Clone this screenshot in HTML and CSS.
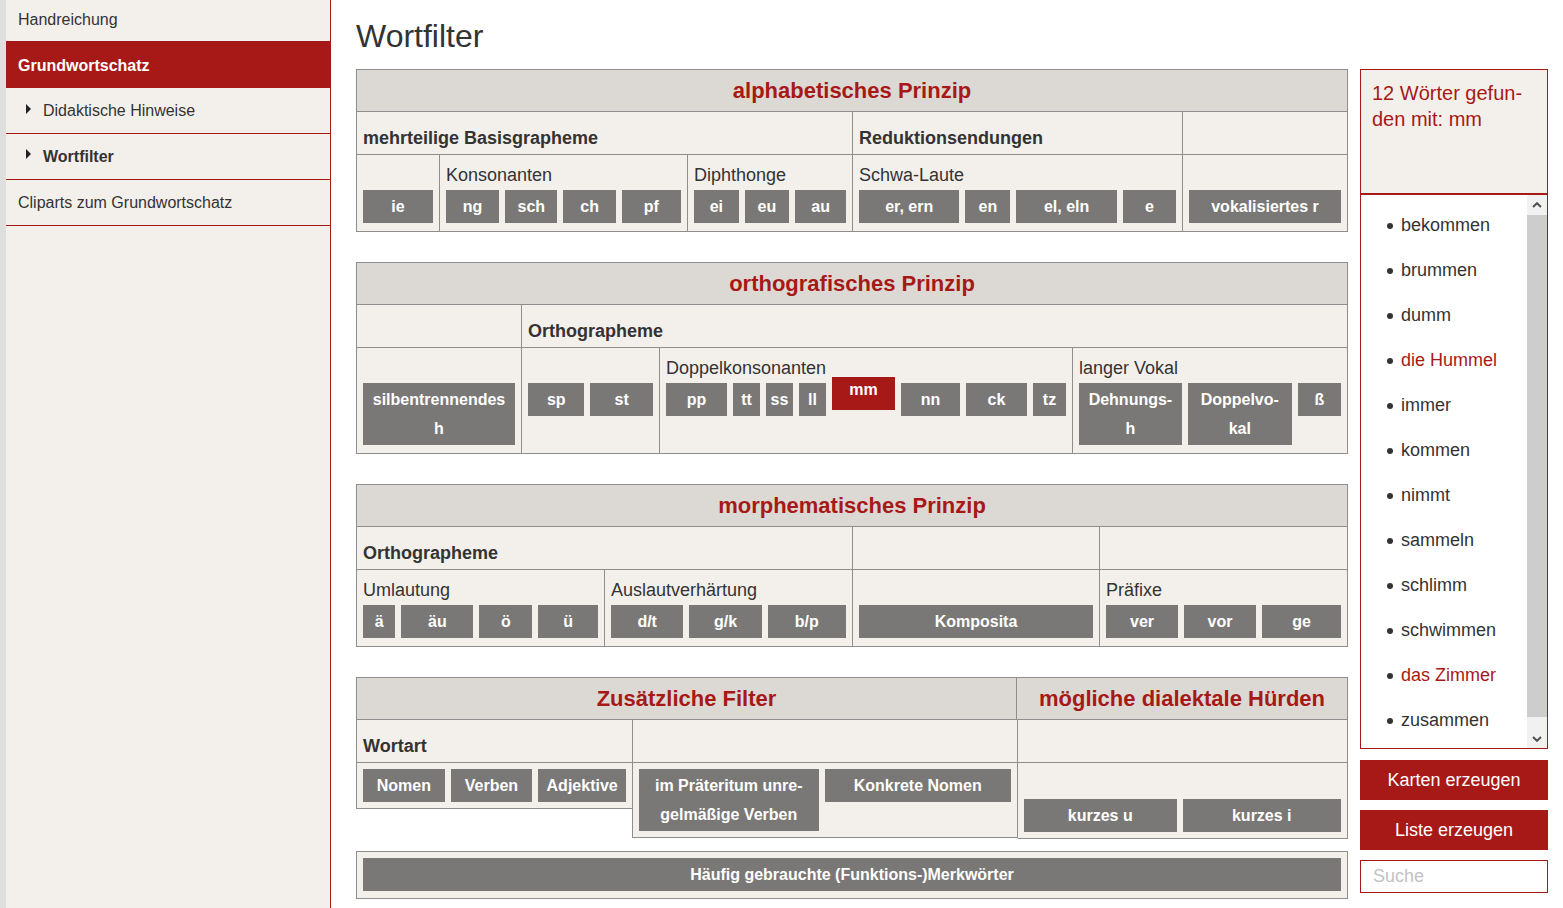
FILE: index.html
```html
<!DOCTYPE html>
<html lang="de">
<head>
<meta charset="utf-8">
<title>Wortfilter</title>
<link rel="stylesheet" href="styles.css">
</head>
<body>
<aside class="sidebar">
  <nav class="nav">
    <a class="nav-item nav-first">Handreichung</a>
    <a class="nav-item nav-active">Grundwortschatz</a>
    <a class="nav-item nav-sub"><span class="caret"></span>Didaktische Hinweise</a>
    <a class="nav-item nav-sub nav-bold"><span class="caret caret-up"></span>Wortfilter</a>
    <a class="nav-item">Cliparts zum Grundwortschatz</a>
  </nav>
</aside>
<main class="main">
  <h1 class="title">Wortfilter</h1>
  <div class="layout">
    <div class="filters">
      <table class="ftable">
        <colgroup><col class="w83"><col class="w248"><col class="w165"><col class="w330"><col class="w165"></colgroup>
        <tr><th colspan="5" class="head">alphabetisches Prinzip</th></tr>
        <tr class="sub"><td colspan="3">mehrteilige Basisgrapheme</td><td>Reduktionsendungen</td><td></td></tr>
        <tr class="btnrow">
          <td><div class="lbl">&nbsp;</div><div class="btns g-1"><span class="btn">ie</span></div></td>
          <td><div class="lbl">Konsonanten</div><div class="btns g-kons"><span class="btn">ng</span><span class="btn">sch</span><span class="btn">ch</span><span class="btn">pf</span></div></td>
          <td><div class="lbl">Diphthonge</div><div class="btns g-diph"><span class="btn">ei</span><span class="btn">eu</span><span class="btn">au</span></div></td>
          <td><div class="lbl">Schwa-Laute</div><div class="btns g-schwa"><span class="btn">er, ern</span><span class="btn">en</span><span class="btn">el, eln</span><span class="btn">e</span></div></td>
          <td><div class="lbl">&nbsp;</div><div class="btns g-1"><span class="btn">vokalisiertes r</span></div></td>
        </tr>
      </table>

      <table class="ftable gap">
        <colgroup><col class="w165"><col class="w138"><col class="w413"><col class="w275"></colgroup>
        <tr><th colspan="4" class="head">orthografisches Prinzip</th></tr>
        <tr class="sub"><td></td><td colspan="3">Orthographeme</td></tr>
        <tr class="btnrow">
          <td><div class="lbl">&nbsp;</div><div class="btns g-1"><span class="btn">silbentrennendes<br>h</span></div></td>
          <td><div class="lbl">&nbsp;</div><div class="btns g-spst"><span class="btn">sp</span><span class="btn">st</span></div></td>
          <td><div class="lbl">Doppelkonsonanten</div><div class="btns g-doppel"><span class="btn">pp</span><span class="btn">tt</span><span class="btn">ss</span><span class="btn">ll</span><span class="btn btn-active">mm</span><span class="btn">nn</span><span class="btn">ck</span><span class="btn">tz</span></div></td>
          <td><div class="lbl">langer Vokal</div><div class="btns g-lang"><span class="btn">Dehnungs-<br>h</span><span class="btn">Doppelvo-<br>kal</span><span class="btn">ß</span></div></td>
        </tr>
      </table>

      <table class="ftable gap">
        <colgroup><col class="w248"><col class="w248"><col class="w247"><col class="w248"></colgroup>
        <tr><th colspan="4" class="head">morphematisches Prinzip</th></tr>
        <tr class="sub"><td colspan="2">Orthographeme</td><td></td><td></td></tr>
        <tr class="btnrow">
          <td><div class="lbl">Umlautung</div><div class="btns g-uml"><span class="btn">ä</span><span class="btn">äu</span><span class="btn">ö</span><span class="btn">ü</span></div></td>
          <td><div class="lbl">Auslautverhärtung</div><div class="btns g-aus"><span class="btn">d/t</span><span class="btn">g/k</span><span class="btn">b/p</span></div></td>
          <td><div class="lbl">&nbsp;</div><div class="btns g-1"><span class="btn">Komposita</span></div></td>
          <td><div class="lbl">Präfixe</div><div class="btns g-pref"><span class="btn">ver</span><span class="btn">vor</span><span class="btn">ge</span></div></td>
        </tr>
      </table>

      <section class="t4 gap">
        <div class="t4-head">
          <div class="t4-th t4-th-wide">Zusätzliche Filter</div>
          <div class="t4-th t4-th-narrow">mögliche dialektale Hürden</div>
        </div>
        <div class="t4-cols">
          <div class="t4-col t4-c1">
            <div class="t4-r2">Wortart</div>
            <div class="t4-r3"><div class="btns g-wortart"><span class="btn">Nomen</span><span class="btn">Verben</span><span class="btn">Adjektive</span></div></div>
          </div>
          <div class="t4-col t4-c2">
            <div class="t4-r2"></div>
            <div class="t4-r3 t4-r3-tall"><div class="btns g-mid"><span class="btn">im Präteritum unre-<br>gelmäßige Verben</span><span class="btn">Konkrete Nomen</span></div></div>
          </div>
          <div class="t4-col t4-c3">
            <div class="t4-r2"></div>
            <div class="t4-r3 t4-r3-lbl"><div class="lbl">&nbsp;</div><div class="btns g-kurz"><span class="btn">kurzes u</span><span class="btn">kurzes i</span></div></div>
          </div>
        </div>
      </section>

      <div class="t5">
        <span class="btn btn-wide">Häufig gebrauchte (Funktions-)Merkwörter</span>
      </div>
    </div>

    <aside class="panel">
      <div class="info">12 Wörter gefun-<br>den mit: mm</div>
      <div class="results">
        <ul class="words">
          <li>bekommen</li>
          <li>brummen</li>
          <li>dumm</li>
          <li class="noun">die Hummel</li>
          <li>immer</li>
          <li>kommen</li>
          <li>nimmt</li>
          <li>sammeln</li>
          <li>schlimm</li>
          <li>schwimmen</li>
          <li class="noun">das Zimmer</li>
          <li>zusammen</li>
        </ul>
        <div class="scrollbar">
          <div class="sb-btn sb-up"><svg width="10" height="6" viewBox="0 0 10 6"><polyline points="1,5 5,1.2 9,5" fill="none" stroke="#505050" stroke-width="2"/></svg></div>
          <div class="sb-thumb"></div>
          <div class="sb-track"></div>
          <div class="sb-btn sb-down"><svg width="10" height="6" viewBox="0 0 10 6"><polyline points="1,1 5,4.8 9,1" fill="none" stroke="#505050" stroke-width="2"/></svg></div>
        </div>
      </div>
      <button class="action">Karten erzeugen</button>
      <button class="action">Liste erzeugen</button>
      <input class="search" type="text" placeholder="Suche">
    </aside>
  </div>
</main>
</body>
</html>
```
FILE: styles.css
```css
* { box-sizing: border-box; }
html, body { margin: 0; padding: 0; }
body {
  display: flex;
  min-height: 100vh;
  font-family: "Liberation Sans", Arial, sans-serif;
  color: #333;
  background: #fff;
}

/* Sidebar */
.sidebar {
  width: 331px;
  flex: 0 0 331px;
  background: #f3f0ec;
  border-left: 6px solid #dfdfdf;
  border-right: 1px solid #a71916;
}
.nav { display: flex; flex-direction: column; margin-top: -4px; }
.nav-item {
  display: flex;
  align-items: center;
  height: 46px;
  padding-left: 12px;
  border-bottom: 1px solid #a71916;
  font-size: 16px;
  color: #333;
  text-decoration: none;
}
.nav-first { padding-top: 2px; }
.nav-active { background: #a71916; color: #fff; font-weight: bold; padding-top: 2px; }
.nav-sub { padding-left: 20px; }
.nav-bold { font-weight: bold; }
.caret {
  width: 0; height: 0;
  border-left: 5px solid #222;
  border-top: 5px solid transparent;
  border-bottom: 5px solid transparent;
  margin-right: 12px;
  margin-top: -4px;
}
.caret-up { margin-top: -6px; }

/* Main */
.main { padding-left: 25px; display: flex; flex-direction: column; }
.title {
  margin: 0;
  padding-top: 17px;
  font-size: 32px;
  line-height: 38px;
  font-weight: normal;
  color: #333;
  margin-bottom: 14px;
}
.layout { display: flex; align-items: flex-start; }
.filters { width: 992px; }
.gap { margin-top: 30px; }

.ftable {
  width: 992px;
  border-collapse: collapse;
  table-layout: fixed;
  background: #f3f0ec;
}
.w83 { width: 83px; }
.w138 { width: 138px; }
.w165 { width: 165px; }
.w247 { width: 247px; }
.w248 { width: 248px; }
.w275 { width: 275px; }
.w330 { width: 330px; }
.w413 { width: 413px; }

.ftable th, .ftable td { border: 1px solid #8e8e8e; padding: 0; }
.head, .t4-th {
  height: 42px;
  background: #dcd9d5;
  color: #a71916;
  font-size: 22px;
  font-weight: bold;
  text-align: center;
  vertical-align: middle;
}
.ftable .sub td {
  height: 43px;
  vertical-align: bottom;
  padding: 0 6px 5px;
  font-weight: bold;
  font-size: 18px;
  line-height: 22px;
}
.ftable .btnrow td { vertical-align: top; padding: 9px 6px 8px; }
.lbl { font-size: 18px; line-height: 22px; margin-bottom: 4px; white-space: nowrap; }

.btns { display: grid; gap: 6px; align-items: start; }
.g-1 { grid-template-columns: 1fr; }
.g-kons { grid-template-columns: 53fr 52fr 52fr 59fr; }
.g-diph { grid-template-columns: 44fr 44fr 50fr; }
.g-schwa { grid-template-columns: 100fr 45fr 100fr 53fr; }
.g-spst { grid-template-columns: 56fr 62fr; }
.g-doppel { grid-template-columns: 61fr 27fr 27fr 27fr 63fr 59fr 61fr 33fr; }
.g-lang { grid-template-columns: 102fr 103fr 43fr; }
.g-uml { grid-template-columns: 32fr 71fr 52fr 59fr; }
.g-aus { grid-template-columns: 72fr 72fr 78fr; }
.g-pref { grid-template-columns: 72fr 72fr 79fr; }
.g-wortart { grid-template-columns: 81fr 81fr 87fr; }
.g-mid { grid-template-columns: 180fr 187fr; }
.g-kurz { grid-template-columns: 153fr 159fr; }

.btn {
  display: block;
  background: #7a7876;
  color: #fff;
  font-size: 16px;
  font-weight: bold;
  line-height: 29px;
  padding: 2px 0;
  text-align: center;
  white-space: nowrap;
  overflow: hidden;
}
.btn-active { background: #a71916; transform: translateY(-6px); line-height: 25px; padding: 0 0 8px; }

/* Table 4 */
.t4-head {
  display: flex;
  border: 1px solid #8e8e8e;
}
.t4-th { display: flex; align-items: center; justify-content: center; height: 41px; }
.t4-th-wide { width: 660px; border-right: 1px solid #8e8e8e; }
.t4-th-narrow { flex: 1; }
.t4-cols { display: flex; align-items: flex-start; }
.t4-col { background: #f3f0ec; border-bottom: 1px solid #8e8e8e; }
.t4-c1 { width: 276px; border-left: 1px solid #8e8e8e; }
.t4-c2 { width: 386px; border-left: 1px solid #8e8e8e; border-right: 1px solid #8e8e8e; }
.t4-c3 { width: 330px; border-right: 1px solid #8e8e8e; }
.t4-r2 {
  height: 43px;
  border-bottom: 1px solid #8e8e8e;
  display: flex;
  align-items: flex-end;
  padding: 0 6px 5px;
  font-weight: bold;
  font-size: 18px;
  line-height: 22px;
}
.t4-r3 { padding: 6px 6px 6px; }
.t4-r3-tall { padding-bottom: 6px; }
.t4-r3-lbl { padding-top: 10px; padding-bottom: 6px; }

.t5 {
  margin-top: 12px;
  border: 1px solid #8e8e8e;
  background: #f3f0ec;
  padding: 6px 6px 7px;
}

/* Right panel */
.panel {
  width: 188px;
  margin-left: 12px;
  display: flex;
  flex-direction: column;
}
.info {
  height: 125px;
  border: 1px solid #a71916;
  background: #f3f0ec;
  color: #a71916;
  font-size: 20px;
  line-height: 26px;
  padding: 10px 6px 0 11px;
  white-space: nowrap;
}
.results {
  height: 555px;
  border: 1px solid #a71916;
  background: #fff;
  display: flex;
  overflow: hidden;
}
.words {
  flex: 1;
  margin: 0;
  padding: 8px 0 0 26px;
  list-style: none;
  font-size: 18px;
  line-height: 45px;
  color: #333;
}
.words li { display: flex; align-items: center; }
.words li::before {
  content: "";
  width: 6px;
  height: 6px;
  border-radius: 50%;
  background: #333;
  margin-right: 8px;
  margin-top: 1px;
}
.noun { color: #a71916; }
.scrollbar {
  width: 20px;
  display: flex;
  flex-direction: column;
  background: #f1f1f1;
}
.sb-btn { display: flex; align-items: center; justify-content: center; }
.sb-up { height: 20px; }
.sb-thumb { height: 502px; background: #cdcdcd; }
.sb-track { height: 13px; }
.sb-down { height: 18px; }

.action {
  margin-top: 11px;
  height: 40px;
  border: 0;
  background: #a71916;
  color: #fff;
  font-family: "Liberation Sans", Arial, sans-serif;
  font-size: 18px;
  padding: 0;
}
.action + .action { margin-top: 10px; }
.search {
  margin-top: 10px;
  height: 33px;
  border: 1px solid #a71916;
  padding: 0 12px;
  font-family: "Liberation Sans", Arial, sans-serif;
  font-size: 18px;
  color: #333;
  outline: none;
}
.search::placeholder { color: #c3c3c3; }
```
